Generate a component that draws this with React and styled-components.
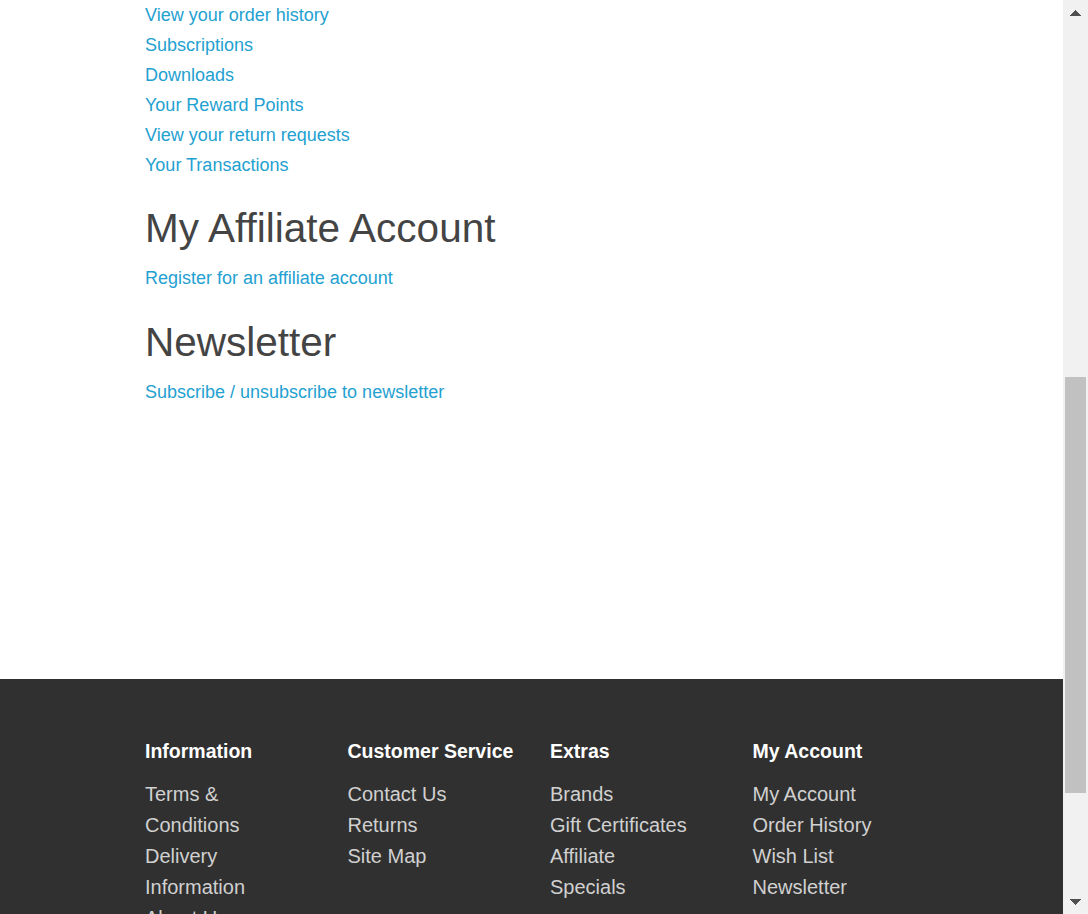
import React, { useLayoutEffect, useRef, useState } from 'react'
import styled, { createGlobalStyle } from 'styled-components'

const GlobalStyle = createGlobalStyle`
  html, body {
    margin: 0;
    height: 100%;
    overflow: hidden;
  }
  body {
    font-family: 'Liberation Sans', Arial, Helvetica, sans-serif;
    font-size: 18px;
    color: #666;
    background: #fff;
  }
  #root {
    height: 100%;
  }
  a {
    text-decoration: none;
  }
`

const Window = styled.div`
  display: flex;
  height: 100vh;
`

const Page = styled.div`
  flex: 1;
  min-width: 0;
  overflow: hidden;
`

/* window scrollbar, drawn beside the page */
const ScrollBar = styled.div`
  width: 25px;
  flex-shrink: 0;
  display: flex;
  flex-direction: column;
  background: #f1f1f1;
`

const ArrowButton = styled.div`
  height: 25px;
  flex-shrink: 0;
  display: flex;
  align-items: center;
  justify-content: center;
`

const Track = styled.div`
  flex: 1;
  padding: 0 2px;
`

const Thumb = styled.div`
  background: #c1c1c1;
`

const Arrow = ({ down }) => (
  <svg width='11' height='6' viewBox='0 0 11 6' shapeRendering='crispEdges'>
    <path d={down ? 'M0 0H11L5.5 6z' : 'M5.5 0L11 6H0z'} fill='#505050' />
  </svg>
)

const Container = styled.div`
  width: 810px;
  margin-left: 130px;
  box-sizing: border-box;
`

/* header bits, scrolled out of view */
const TopBar = styled.nav`
  height: 60px;
  box-sizing: border-box;
  background: #eee;
  border-bottom: 1px solid #e2e2e2;
  font-size: 16px;
  color: #888;
`

const TopRow = styled.div`
  display: flex;
  justify-content: space-between;
  align-items: center;
  height: 59px;
  padding: 0 15px;
`

const TopLinks = styled.div`
  display: flex;
  gap: 18px;
`

const Header = styled.header`
  height: 276px;
  box-sizing: border-box;
  padding-top: 40px;
`

const HeaderRow = styled.div`
  display: flex;
  align-items: center;
  gap: 30px;
  padding: 0 15px;
`

const Logo = styled.h1`
  margin: 0;
  font-size: 48px;
  font-weight: 400;
  color: #23a1d1;
  width: 250px;
`

const Search = styled.div`
  flex: 1;
  height: 60px;
  border: 1px solid #ccc;
  border-radius: 6px;
  display: flex;
  align-items: center;
  padding: 0 16px;
  color: #999;
`

const CartButton = styled.div`
  height: 60px;
  padding: 0 24px;
  display: flex;
  align-items: center;
  background: #363636;
  color: #fff;
  border-radius: 6px;
`

const Menu = styled.nav`
  height: 60px;
  margin: 0 15px 30px;
  background: #229ac8;
  border-radius: 6px;
  display: flex;
  align-items: center;
  gap: 22px;
  padding: 0 16px;
  color: #fff;
  font-size: 17px;
  white-space: nowrap;
  overflow: hidden;
`

const Breadcrumb = styled.ul`
  height: 58px;
  box-sizing: border-box;
  margin: 0 15px 30px;
  padding: 0 20px;
  list-style: none;
  display: flex;
  align-items: center;
  gap: 14px;
  border: 1px solid #ddd;
  border-radius: 6px;
  background: #f5f5f5;
`

/* account content */
const Content = styled.div`
  padding: 0 15px 242px;
`

const Heading = styled.h2`
  margin: 26.5px 0 13px;
  font-size: 40.5px;
  line-height: 44px;
  font-weight: 400;
  color: #444;

  &:first-child {
    margin-top: 0;
  }
`

const LinkList = styled.ul`
  margin: 0;
  padding: 0;
  list-style: none;
`

const LinkItem = styled.li`
  line-height: 30px;
`

const Link = styled.a`
  font-size: 18px;
  color: #23a1d1;
`

/* footer */
const Footer = styled.footer`
  margin-top: 30px;
  padding: 62px 0 90px;
  background: #303030;
  color: #e2e2e2;
`

const FooterGrid = styled.div`
  display: grid;
  grid-template-columns: repeat(4, 1fr);
`

const FooterCol = styled.div`
  padding: 0 15px;
`

const FooterHeading = styled.h5`
  margin: 0 0 17px;
  font-size: 19.5px;
  line-height: 21.5px;
  font-weight: 700;
  color: #fff;
`

const FooterLink = styled.a`
  display: block;
  font-size: 20px;
  line-height: 31px;
  color: #d0d0d0;
`

const Rule = styled.hr`
  margin: 20px 15px;
  border: 0;
  border-top: 1px solid #666;
`

const Powered = styled.p`
  margin: 0;
  padding: 0 15px;
  font-size: 18px;
  line-height: 30px;
  color: #d0d0d0;
`

const accountLinks = [
  'Edit your account information',
  'Change your password',
  'Modify your address book entries',
  'Modify your wish list',
]

const orderLinks = [
  'View your order history',
  'Subscriptions',
  'Downloads',
  'Your Reward Points',
  'View your return requests',
  'Your Transactions',
]

const footerCols = [
  {
    title: 'Information',
    links: ['Terms & Conditions', 'Delivery Information', 'About Us', 'Privacy Policy'],
  },
  { title: 'Customer Service', links: ['Contact Us', 'Returns', 'Site Map'] },
  { title: 'Extras', links: ['Brands', 'Gift Certificates', 'Affiliate', 'Specials'] },
  { title: 'My Account', links: ['My Account', 'Order History', 'Wish List', 'Newsletter'] },
]

const menuItems = [
  'Desktops',
  'Laptops & Notebooks',
  'Components',
  'Tablets',
  'Software',
  'Phones & PDAs',
  'Cameras',
  'MP3 Players',
]

const Links = ({ items, listRef }) => (
  <LinkList ref={listRef}>
    {items.map((item) => (
      <LinkItem key={item}>
        <Link href='#'>{item}</Link>
      </LinkItem>
    ))}
  </LinkList>
)

const App = () => {
  const pageRef = useRef(null)
  const ordersRef = useRef(null)
  const trackRef = useRef(null)
  const [thumb, setThumb] = useState({ top: 351, height: 416 })

  // the page is shown scrolled down to the "My Orders" list
  useLayoutEffect(() => {
    const page = pageRef.current
    const list = ordersRef.current
    const track = trackRef.current
    if (!page || !list || !track) return
    page.scrollTop =
      list.getBoundingClientRect().top - page.getBoundingClientRect().top
    const len = track.clientHeight
    setThumb({
      top: (len * page.scrollTop) / page.scrollHeight,
      height: (len * page.clientHeight) / page.scrollHeight,
    })
  }, [])

  return (
    <>
      <GlobalStyle />
      <Window>
        <Page ref={pageRef}>
          <TopBar>
            <Container>
              <TopRow>
                <span>$ Currency</span>
                <TopLinks>
                  <span>123456789</span>
                  <span>My Account</span>
                  <span>Wish List (0)</span>
                  <span>Shopping Cart</span>
                  <span>Checkout</span>
                </TopLinks>
              </TopRow>
            </Container>
          </TopBar>
          <Header>
            <Container>
              <HeaderRow>
                <Logo>Your Store</Logo>
                <Search>Search</Search>
                <CartButton>0 item(s) - $0.00</CartButton>
              </HeaderRow>
            </Container>
          </Header>
          <Container>
            <Menu>
              {menuItems.map((m) => (
                <span key={m}>{m}</span>
              ))}
            </Menu>
            <Breadcrumb>
              <li>Home</li>
              <li>/</li>
              <li>Account</li>
            </Breadcrumb>
            <Content>
              <Heading>My Account</Heading>
              <Links items={accountLinks} />
              <Heading>My Orders</Heading>
              <Links items={orderLinks} listRef={ordersRef} />
              <Heading>My Affiliate Account</Heading>
              <Links items={['Register for an affiliate account']} />
              <Heading>Newsletter</Heading>
              <Links items={['Subscribe / unsubscribe to newsletter']} />
            </Content>
          </Container>
          <Footer>
            <Container>
              <FooterGrid>
                {footerCols.map((col) => (
                  <FooterCol key={col.title}>
                    <FooterHeading>{col.title}</FooterHeading>
                    {col.links.map((l) => (
                      <FooterLink key={l} href='#'>
                        {l}
                      </FooterLink>
                    ))}
                  </FooterCol>
                ))}
              </FooterGrid>
              <Rule />
              <Powered>Powered By OpenCart Your Store © 2024</Powered>
            </Container>
          </Footer>
        </Page>
        <ScrollBar>
          <ArrowButton>
            <Arrow />
          </ArrowButton>
          <Track ref={trackRef}>
            <Thumb style={{ marginTop: thumb.top, height: thumb.height }} />
          </Track>
          <ArrowButton>
            <Arrow down />
          </ArrowButton>
        </ScrollBar>
      </Window>
    </>
  )
}

export default App
